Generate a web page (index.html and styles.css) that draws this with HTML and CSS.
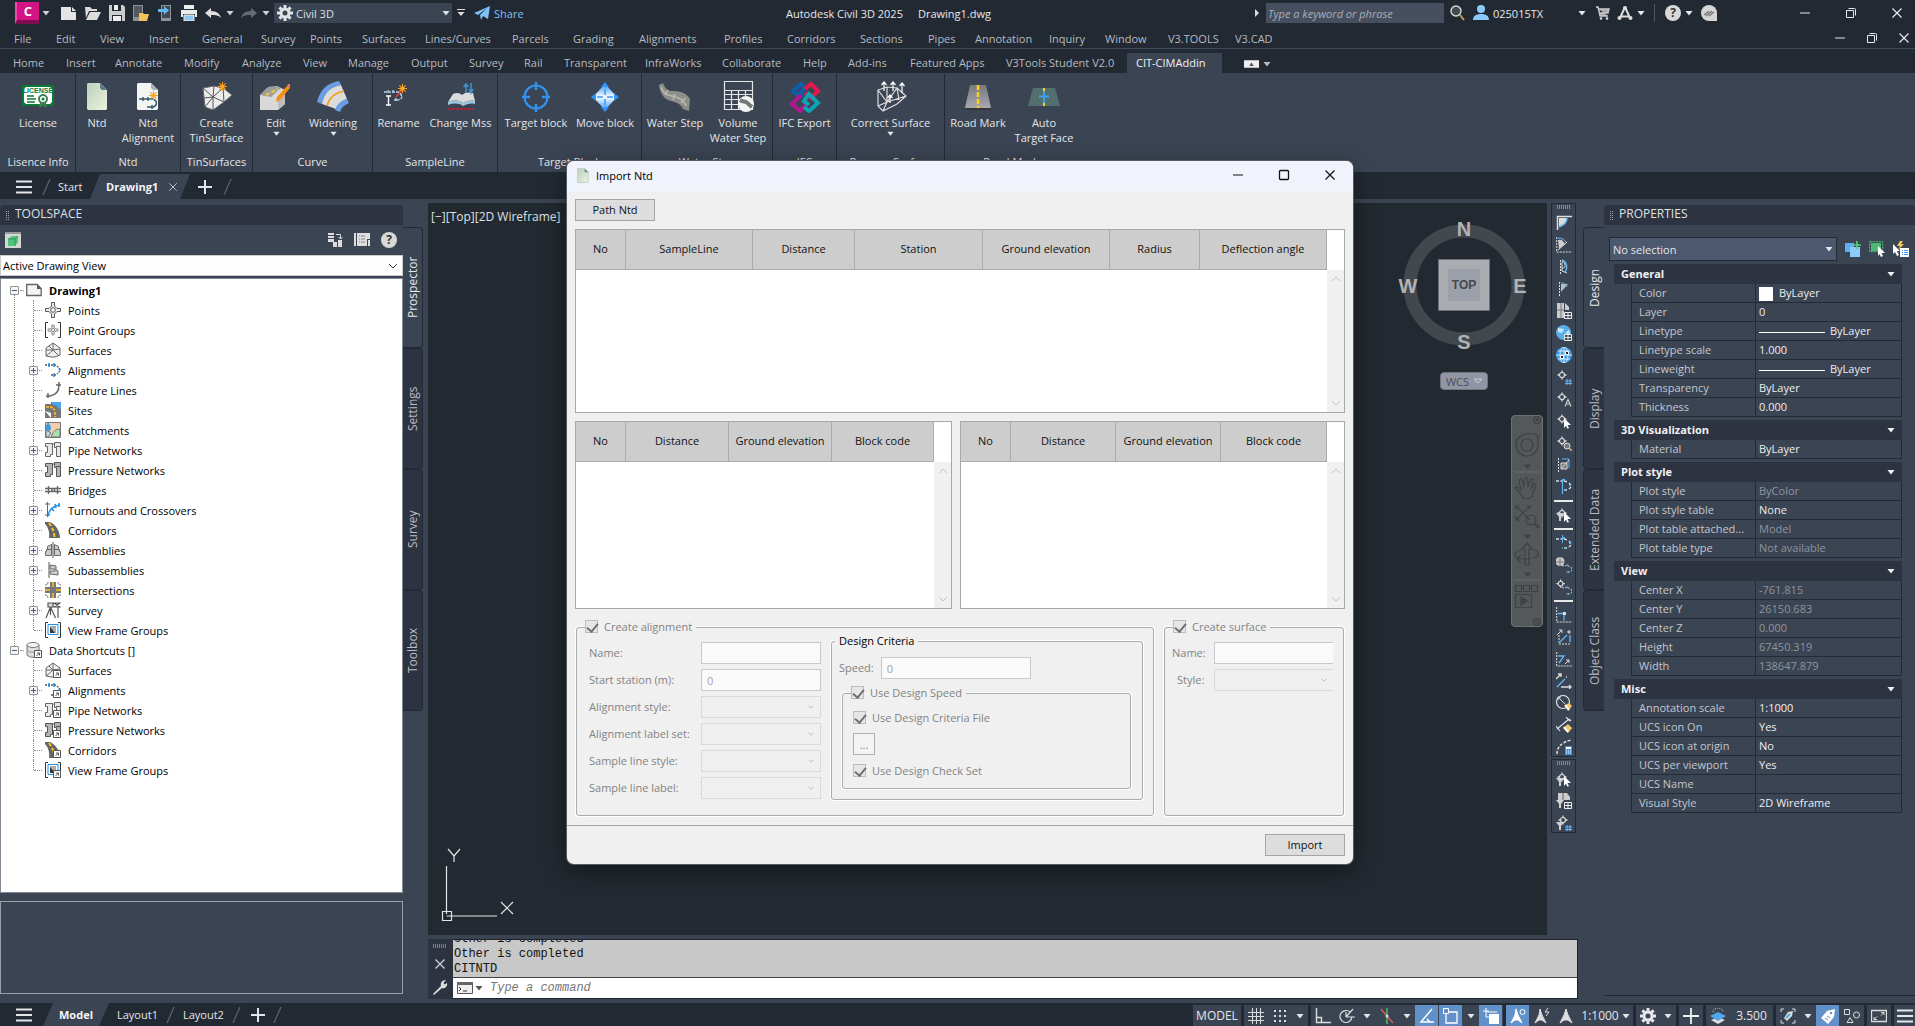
FILE: index.html
```html
<!DOCTYPE html>
<html lang="en">
<head>
<meta charset="utf-8">
<title>Autodesk Civil 3D 2025 - Drawing1.dwg</title>
<link rel="stylesheet" href="styles.css">
</head>
<body>
<svg class="defs" aria-hidden="true">
  <defs>
    <linearGradient id="gPage" x1="0" y1="0" x2="1" y2="1"><stop offset="0" stop-color="#b9d0bf"/><stop offset="1" stop-color="#eef3dc"/></linearGradient>
    <linearGradient id="gMove" x1="0" y1="0" x2="0" y2="1"><stop offset="0" stop-color="#2e95ff"/><stop offset=".5" stop-color="#fff"/><stop offset="1" stop-color="#2e95ff"/></linearGradient>
    <linearGradient id="gRoad" x1="0" y1="0" x2="0" y2="1"><stop offset="0" stop-color="#77797d"/><stop offset="1" stop-color="#a8a8ae"/></linearGradient>
  </defs>
  <symbol id="caret" viewBox="0 0 8 8"><path d="M0.500 2h7L4 6.500z" fill="currentColor"/></symbol>
  <symbol id="chev" viewBox="0 0 10 10"><path d="M1 3l4 4 4-4" fill="none" stroke="currentColor"/></symbol>
  <symbol id="burger" viewBox="0 0 16 14"><path d="M0 1.500h16M0 7h16M0 12.500h16" stroke="currentColor" stroke-width="2.200"/></symbol>
  <symbol id="plus" viewBox="0 0 14 14"><path d="M7 0v14M0 7h14" stroke="currentColor" stroke-width="2"/></symbol>
  <symbol id="slash" viewBox="0 0 9 18"><path d="M8 1L1 17" stroke="#5a6271" stroke-width="1.300"/></symbol>
  <symbol id="gear" viewBox="0 0 16 16"><g stroke="currentColor" stroke-width="3"><path d="M8 0v16M0 8h16M2.400 2.400l11.200 11.200M13.600 2.400L2.400 13.600"/></g><circle cx="8" cy="8" r="5.500" fill="currentColor"/><circle cx="8" cy="8" r="2.500" fill="#3b4453"/></symbol>
  <symbol id="min" viewBox="0 0 12 12"><path d="M1 6h10" stroke="currentColor"/></symbol>
  <symbol id="restore" viewBox="0 0 12 12"><path d="M1.500 3.500h7v7h-7zM3.500 1.500h6a1 1 0 0 1 1 1v6" fill="none" stroke="currentColor"/></symbol>
  <symbol id="max" viewBox="0 0 12 12"><rect x="1.500" y="1.500" width="9" height="9" rx="1" fill="none" stroke="currentColor" stroke-width="1.300"/></symbol>
  <symbol id="x" viewBox="0 0 12 12"><path d="M1.500 1.500l9 9M10.500 1.500l-9 9" stroke="currentColor" stroke-width="1.200"/></symbol>
  <symbol id="star" viewBox="0 0 10 10"><path d="M5 0v10M0 5h10M1.500 1.500l7 7M8.500 1.500l-7 7" stroke="#f9a11b" stroke-width="1.200"/><circle cx="5" cy="5" r="2.300" fill="#ffa51c"/></symbol>
  <symbol id="page" viewBox="0 0 22 28"><path d="M1 1h13l7 7v19H1z" fill="url(#gPage)" stroke="#a9bcae"/><path d="M14 1v7h7z" fill="#6f8f86"/></symbol>
  <symbol id="pt" viewBox="0 0 16 16"><path d="M6.500 .5h3v3.500L12 6.500h3.500v3H12L9.500 12v3.500h-3V12L4 9.500H.5v-3H4L6.500 4z" fill="#eee" stroke="#555"/><circle cx="8" cy="8" r="2.300" fill="#fff" stroke="#555"/></symbol>
  <symbol id="surf" viewBox="0 0 16 16"><path d="M8 1L1 6v8l5 1h4l5-2V6zM8 1v7L1 14M8 8l6 6M1 8l7 0 7-1M4 4l4 4" fill="#eee" stroke="#666"/></symbol>
  <symbol id="align" viewBox="0 0 16 16"><path d="M0 3h11M12 4l3 3M15 9l-3 3M11 13H5" fill="none" stroke="#555" stroke-width="1.300" stroke-dasharray="2 1"/><path d="M4 1v4M9 1v4M13.500 7.500h2.500M9 11v4" stroke="#1e90ea" stroke-width="1.500"/></symbol>
  <symbol id="fline" viewBox="0 0 16 16"><path d="M1 14h4C11 13 14 9 14 3M3 11v5M11 3h5M14 0v4" fill="none" stroke="#666" stroke-width="1.500"/></symbol>
  <symbol id="road" viewBox="0 0 16 16"><path d="M0 0h5c6 3 10 9 10 16H4C5 10 3 5 0 2z" fill="#666"/><path d="M4 1l2 3M7 6l1.500 3M9 11l.5 4" stroke="#ffc41e" stroke-width="2"/></symbol>
  <symbol id="sites" viewBox="0 0 16 16"><path d="M0 0h16v16H0z" fill="#777"/><path d="M7 0h9v8C13 5 11 3 7 2z" fill="#4aa6e8"/><path d="M0 9l6 2v5z" fill="#fff"/><path d="M0 0h6v2H0z" fill="#fff"/><path d="M1 5h5l4 3M10 10v5" stroke="#ffc41e" stroke-width="1.500" stroke-dasharray="3 1" fill="none"/></symbol>
  <symbol id="catch" viewBox="0 0 16 16"><path d="M.5 .5h15v15H.5z" fill="#f7cbb0" stroke="#777"/><path d="M15 7C9 7 8 11 6 15h9z" fill="#a8e0b4" stroke="#777"/><path d="M1 8l5 3-3 4H1z" fill="#b3dcf5" stroke="#777"/><path d="M3 0c2 3 3 4 3 6a3 3 0 0 1-6 0c0-2 2-3 3-6z" fill="#3d9edb"/></symbol>
  <symbol id="pipe" viewBox="0 0 16 16"><path d="M.5 1.500h7v11h-2v2h-5v-4h2v-6h-2zM9.500 .5h6v14h-4v-9h-2zM7.500 2h2M11 4.500h5" fill="#e8e8e8" stroke="#666"/></symbol>
  <symbol id="press" viewBox="0 0 16 16"><path d="M.5 1.500h7v11h-2v2h-5v-4h2v-6h-2zM9.500 .5h6v14h-4v-9h-2zM7.500 2h2M11 4.500h5" fill="#b4b4b4" stroke="#555"/></symbol>
  <symbol id="bridge" viewBox="0 0 16 16"><path d="M0 6.500h16M0 9.500h16M3.500 4v8M12.500 4v8M7 6v3M9.500 6v3" stroke="#666" stroke-width="1.400"/></symbol>
  <symbol id="turn" viewBox="0 0 16 16"><path d="M2.500 0v15M0 2h5M0 13h5" stroke="#666"/><path d="M3 14C4 8 7 4 15 3M6 6l3 3M10 2l1 4M14 1v4" stroke="#1e90ea" stroke-width="1.600" fill="none"/></symbol>
  <symbol id="assem" viewBox="0 0 16 16"><path d="M8 0v16" stroke="#555"/><path d="M1.500 7.500h5v6h-6v-4h1zM9.500 7.500h5v2h1v4h-6zM2.500 4.500l4-2v5h-4zM9.500 2.500l4 2v3h-4z" fill="#ccc" stroke="#666"/></symbol>
  <symbol id="subas" viewBox="0 0 16 16"><path d="M4 0v16" stroke="#555"/><path d="M5 3l6 1v4l2 1v4l-8-1V9h5V7H5z" fill="#ccc" stroke="#666"/></symbol>
  <symbol id="inter" viewBox="0 0 16 16"><path d="M5 0h6v5h5v6h-5v5H5v-5H0V5h5z" fill="#777"/><path d="M8 0v5M8 11v5M0 8h5M11 8h5" stroke="#ffc41e" stroke-width="1.500"/><path d="M3 0c0 2-1 3-3 3M13 0c0 2 1 3 3 3M3 16c0-2-1-3-3-3M13 16c0-2 1-3 3-3" stroke="#777" fill="none"/></symbol>
  <symbol id="survey" viewBox="0 0 16 16"><path d="M3 1h5v4H3zM5.500 5L1 16M5.500 5l5 11M5.500 5v8M9 1h6l-6 4h6zM13 5v11" fill="#ddd" stroke="#555" stroke-width="1.200"/></symbol>
  <symbol id="vframe" viewBox="0 0 16 16"><path d="M3 .5H.5v15H3M13 .5h2.500v15H13" stroke="#333" fill="none"/><path d="M3 2.500h10v10H3z" fill="#fff" stroke="#1e90ea"/><path d="M5 4h6v7H5z" fill="#aaa"/><path d="M5 5l5 6H5z" fill="#333"/></symbol>
  <symbol id="link" viewBox="0 0 16 16"><path d="M8.500 8.500h7v7h-7z" fill="#fff" stroke="#555"/><path d="M11 11h2.500v2.500M13.500 11L10.500 14" stroke="#555" fill="none"/></symbol>
  <symbol id="pw" viewBox="0 0 16 16"><path d="M6 1.500v9M1.500 6h9" stroke="#ddd" stroke-width="1.300"/><circle cx="6" cy="6" r="2.500" fill="#3b4453" stroke="#ddd" stroke-width="1.200"/></symbol>
  <symbol id="arrowc" viewBox="0 0 16 16"><path d="M8 5l7 7h-3.500l1.500 3-1.500.8-1.500-3L8 15z" fill="#fff"/></symbol>
  <symbol id="hash" viewBox="0 0 16 16"><path d="M11 10v6M14 10v6M9 12h7M9 14.500h7" stroke="#63b6f5" stroke-width="1.100"/></symbol>
  <symbol id="tbl" viewBox="0 0 16 16"><path d="M8.500 9.500h7v6h-7zM12 9.500v6M8.500 12.500h7" fill="#3b4453" stroke="#eee"/></symbol>
  <symbol id="funnel" viewBox="0 0 16 16"><path d="M0 8h8L5 12v4H3v-4z" fill="#cfcfcf"/></symbol>
  <symbol id="dalign" viewBox="0 0 16 16"><path d="M0 4h6M8 4l4 1M13 6l3 3M15 10l-3 3M11 13H6" stroke="#ddd" stroke-width="1.400" stroke-dasharray="3 1.500"/><path d="M6 3h3M14 7v2M9 12v2" stroke="#63b6f5" stroke-width="2"/></symbol>
  <symbol id="grip" viewBox="0 0 14 4"><path d="M0 1h14M0 3h14" stroke="#c8ccd2" stroke-dasharray="1 1"/></symbol>
</svg>

<header class="titlebar">
  <div class="qat">
    <button class="logo" aria-label="Application menu">C</button><button class="car" aria-label="Menu"><svg><use href="#caret"/></svg></button>
    <div class="qicons">
      <button aria-label="New"><svg class="i" viewBox="0 0 16 16"><path d="M0 2h10v5h5v8H0z" fill="#e4e4e4"/><path d="M11 2l4 4h-4z" fill="#e4e4e4"/></svg></button>
      <button aria-label="Open"><svg class="i" viewBox="0 0 16 16"><path d="M0 2h5l2 2h5v2H4L1 13z" fill="#ddd"/><path d="M5 7h11l-4 8H1z" fill="#ddd"/></svg></button>
      <button aria-label="Save"><svg class="i" viewBox="0 0 16 16"><path d="M0 0h14l2 2v14H0z" fill="#ccc"/><path d="M3 0h9v6H3zM3 10h10v6H3z" fill="#222933"/><path d="M5 0h4v5H5zM4 11h8v5H4z" fill="#eee"/></svg></button>
      <button aria-label="Open from mobile"><svg class="i" viewBox="0 0 16 16"><path d="M0 0h10v16H0z" fill="#8f9296"/><path d="M1 1h8v11H1z" fill="#55585c"/><path d="M6 8h4l1 1h5l-2 7H6z" fill="#f4c25c"/></svg></button>
      <button aria-label="Save to mobile"><svg class="i" viewBox="0 0 16 16"><path d="M4 0h10v16H4z" fill="#8f9296"/><path d="M5 1h8v12H5z" fill="#44494f"/><path d="M1 4h6V1l5 4.500-5 4V7H1z" fill="#63b6f5"/></svg></button>
      <button aria-label="Plot"><svg class="i" viewBox="0 0 16 16"><path d="M3 0h10v4H3zM0 5h16v7h-2V9H2v3H0z" fill="#ececec"/><path d="M3 10h10v6H3z" fill="#8dc7f5" stroke="#eee"/></svg></button>
      <div class="split"><button aria-label="Undo"><svg class="i" viewBox="0 0 16 16"><path d="M0 8l6-5v3c6 0 9 3 10 7-3-3-5-3-10-3v3z" fill="#e0e0e0"/></svg></button><button class="car" aria-label="Undo list"><svg><use href="#caret"/></svg></button></div>
      <div class="split dim"><button aria-label="Redo"><svg class="i" viewBox="0 0 16 16"><path d="M16 8l-6-5v3C4 6 1 9 0 13c3-3 5-3 10-3v3z" fill="#666c76"/></svg></button><button class="car" aria-label="Redo list"><svg><use href="#caret"/></svg></button></div>
    </div>
    <label class="workspace"><svg class="i"><use href="#gear"/></svg><select aria-label="Workspace"><option>Civil 3D</option></select><svg class="ca"><use href="#caret"/></svg></label>
    <button class="car" aria-label="Customize"><svg viewBox="0 0 8 8"><path d="M0 .5h8" stroke="#ddd"/><path d="M.5 3h7L4 7z" fill="#ddd"/></svg></button>
    <button class="share"><svg class="i" viewBox="0 0 16 16"><path d="M0 8L16 1l-2 13-5-3-2 4-1-5 7-7-9 7z" fill="#7cc1f7"/></svg>Share</button>
  </div>
  <div class="doctitle"><span>Autodesk Civil 3D 2025</span><span>Drawing1.dwg</span></div>
  <div class="infobar">
    <svg class="ca" viewBox="0 0 8 8"><path d="M2 0v8l4-4z" fill="#ddd"/></svg>
    <input class="search" type="text" placeholder="Type a keyword or phrase" aria-label="Search">
    <button class="mag" aria-label="Search"><svg class="i" viewBox="0 0 16 16"><circle cx="7" cy="6" r="5" fill="#444b54" stroke="#ddd" stroke-width="1.400"/><path d="M11 10l4 5" stroke="#c79c5c" stroke-width="2"/></svg></button>
    <button class="user"><svg class="i" viewBox="0 0 16 16"><circle cx="8" cy="4" r="4" fill="#8acbfb"/><path d="M0 15c0-4 3-6 8-6s8 2 8 6z" fill="#8acbfb"/></svg>025015TX</button>
    <svg class="ca push"><use href="#caret"/></svg>
    <button aria-label="Store"><svg class="i" viewBox="0 0 16 16"><path d="M1 2h2l2 9h8M4 4h10l-1 4H5" fill="#aaa" stroke="#ccc" stroke-width="1.300"/><circle cx="6" cy="13.500" r="1.300" fill="#ddd"/><circle cx="12" cy="13.500" r="1.300" fill="#ddd"/></svg></button>
    <div class="split"><button aria-label="Autodesk apps"><svg class="i" viewBox="0 0 16 16"><path d="M8 2L3 13M8 2l5 11M3 11.500h10" stroke="#ddd" stroke-width="2"/><circle cx="8" cy="3" r="2" fill="#ddd"/><circle cx="2.500" cy="13" r="2" fill="#ddd"/><circle cx="13.500" cy="13" r="2" fill="#ddd"/></svg></button><svg class="ca"><use href="#caret"/></svg></div>
    <span class="vbar"></span>
    <div class="split"><button class="q" aria-label="Help">?</button><svg class="ca"><use href="#caret"/></svg></div>
    <button aria-label="Feedback"><svg class="i" viewBox="0 0 16 16"><path d="M8 0a8 8 0 0 1 8 8v8H8A8 8 0 0 1 8 0z" fill="#d5d5d5"/><path d="M3 10l5-4M5 11l6-5M8 11l5-4" stroke="#777" stroke-width="1.500"/></svg></button>
    <div class="winctl"><button aria-label="Minimize"><svg><use href="#min"/></svg></button><button aria-label="Restore"><svg><use href="#restore"/></svg></button><button aria-label="Close"><svg><use href="#x"/></svg></button></div>
  </div>
</header>

<nav class="menubar">
  <div class="menus"><a href="#">File</a><a href="#">Edit</a><a href="#">View</a><a href="#">Insert</a><a href="#">General</a><a href="#">Survey</a><a href="#">Points</a><a href="#">Surfaces</a><a href="#">Lines/Curves</a><a href="#">Parcels</a><a href="#">Grading</a><a href="#">Alignments</a><a href="#">Profiles</a><a href="#">Corridors</a><a href="#">Sections</a><a href="#">Pipes</a><a href="#">Annotation</a><a href="#">Inquiry</a><a href="#">Window</a><a href="#">V3.TOOLS</a><a href="#">V3.CAD</a></div>
  <div class="docctl"><button aria-label="Minimize drawing"><svg><use href="#min"/></svg></button><button aria-label="Restore drawing"><svg><use href="#restore"/></svg></button><button aria-label="Close drawing"><svg><use href="#x"/></svg></button></div>
</nav>

<nav class="rtabs"><a href="#">Home</a><a href="#">Insert</a><a href="#">Annotate</a><a href="#">Modify</a><a href="#">Analyze</a><a href="#">View</a><a href="#">Manage</a><a href="#">Output</a><a href="#">Survey</a><a href="#">Rail</a><a href="#">Transparent</a><a href="#">InfraWorks</a><a href="#">Collaborate</a><a href="#">Help</a><a href="#">Add-ins</a><a href="#">Featured Apps</a><a href="#">V3Tools Student V2.0</a><a href="#" class="on">CIT-CIMAddin</a><button class="rmin" aria-label="Minimize ribbon"><svg class="rbox" viewBox="0 0 16 8"><path d="M0 0h16v8H0z" fill="#eee"/><path d="M5.500 6h5L8 2.500z" fill="#555"/></svg><svg class="ca"><use href="#caret"/></svg></button></nav>

<section class="ribbon">
  <div class="rp p1"><div class="rb"><button><svg viewBox="0 0 32 32"><rect x="0" y="4" width="32" height="21" rx="1" fill="#0b7a34"/><path d="M4 6h24l2 2v13l-2 2H4l-2-2V8z" fill="#fff"/><text x="16" y="12" font-size="7" font-weight="700" text-anchor="middle" fill="#0b7a34" class="sv">LICENSE</text><path d="M5 15h7M5 18h9M5 21h8" stroke="#0b7a34" stroke-width="1.500"/><circle cx="21" cy="18" r="4" fill="#fff" stroke="#3f7d59" stroke-width="2"/><circle cx="21" cy="18" r="1.500" fill="#0b7a34"/><path d="M18 22l-1 4h3l1-3 1 3h3l-1-4" fill="#3f7d59"/></svg>License</button></div><h2>Lisence Info</h2></div>
  <div class="rp p2"><div class="rb"><button><svg viewBox="0 0 32 32"><path d="M6 3l1-1h12l7 7v19l-1 1H7l-1-1z" fill="url(#gPage)"/><path d="M19 2v5l2 2h5z" fill="#5b7c86"/></svg>Ntd</button><button><svg viewBox="0 0 32 32"><path d="M5 3l1-1h13l7 7v19l-1 1H6l-1-1z" fill="#f3f5f3"/><path d="M19 2v5l2 2h5z" fill="#a5b2b4"/><path d="M7 18h14c5 2 4 7 0 8h-6M11 16v4M16 16v4M20 24v4" fill="none" stroke="#33556b" stroke-width="1.400"/><use href="#star" x="17" y="10" width="9" height="9"/></svg>Ntd<br>Alignment</button></div><h2>Ntd</h2></div>
  <div class="rp p3"><div class="rb"><button><svg viewBox="0 0 32 32"><path d="M2 7l11-2 9 2 9 7-8 7-11 8-8-3z" fill="#ececec" stroke="#666"/><path d="M2 7l10 9L4 26M12 16l1-11M12 16l10-9M12 16l11 5M12 16v13M22 7l1 14M3 17l9-1" stroke="#555" fill="none"/><use href="#star" x="17" y="1" width="9" height="9"/></svg>Create<br>TinSurface</button></div><h2>TinSurfaces</h2></div>
  <div class="rp p4"><div class="rb"><button><svg viewBox="0 0 32 32"><path d="M0 14L7 7l10-2 8 4v14l-7 6H0z" fill="#d9d9d9"/><path d="M0 14L8 6c4-1 9-1 13 1l-10 9z" fill="#9c9c9c"/><path d="M18 16l7-5v12l-7 6z" fill="#bdbdbd"/><path d="M6 14l12-6" stroke="#f6c945" stroke-width="2" stroke-dasharray="4 2"/><path d="M16 21l1-5L27 5l3 2-10 12z" fill="#f7900c"/><path d="M27 5l1-2h2v4z" fill="#e37b78"/></svg>Edit<svg class="ca"><use href="#caret"/></svg></button><button><svg viewBox="0 0 32 32"><path d="M0 21C3 9 10 2 22 0l2 4C13 6 7 12 5 23z" fill="#6a9ee2"/><path d="M5 23C7 12 13 6 24 4l6 14c-6 2-9 5-11 10z" fill="#dcdcdc"/><path d="M30 18l2 4c-5 2-8 5-9 9l-5-2c2-6 6-9 12-11z" fill="#6a9ee2"/><path d="M10 25c2-8 7-13 17-15" stroke="#f0a020" stroke-width="1.600" fill="none"/></svg>Widening<svg class="ca"><use href="#caret"/></svg></button></div><h2>Curve</h2></div>
  <div class="rp p5"><div class="rb"><button><svg viewBox="0 0 32 32"><path d="M1 11h13c6 1 7 8 0 8h-3M5 9v4M10 9v4M17 13l2 2M13 17v4" fill="none" stroke="#b5cfe2" stroke-width="1.300" stroke-dasharray="3 1"/><path d="M3 15h5M5.500 15v9M3 24h5" stroke="#fff" stroke-width="1.400"/><path d="M13 16l7-8" stroke="#e33" stroke-width="1.500"/><use href="#star" x="15" y="3" width="9" height="9"/></svg>Rename</button><button><svg viewBox="0 0 32 32"><path d="M3 21l5-8c4-2 7-1 9 1 3-3 7-3 11-2l2 8c-4-1-8 0-12 2-4-3-9-3-15-1z" fill="#dcdcdc"/><path d="M3 21c6-2 11-2 15 1 4-2 8-3 12-2v3c-5-1-8 0-12 2-4-3-9-3-15-1z" fill="#9cc8df"/><path d="M3 28h26" stroke="#b5263b" stroke-width="1.500" stroke-dasharray="3 1"/><path d="M21 12V3M18.500 6L21 3l2.500 3M26 2v9M24 8l2 4 2-4" stroke="#3f93cc" stroke-width="1.600" fill="none"/></svg>Change Mss</button></div><h2>SampleLine</h2></div>
  <div class="rp p6"><div class="rb"><button><svg viewBox="0 0 32 32"><circle cx="16" cy="16" r="11.500" fill="none" stroke="#3293ee" stroke-width="2.200"/><path d="M16 1v8M16 23v8M2 16h8M22 16h8" stroke="#3293ee" stroke-width="2.500"/></svg>Target block</button><button><svg viewBox="0 0 32 32"><path d="M16 3l12 13-12 13L4 16z" fill="url(#gMove)"/><path d="M16 8v16M8 16h16" stroke="#3b98f5" stroke-width="1.500" stroke-dasharray="6 4"/><path d="M12 6l4-5 4 5zM12 26l4 5 4-5zM7 12l-5 4 5 4zM25 12l5 4-5 4z" fill="#2e95ff"/></svg>Move block</button></div><h2>Target Block</h2></div>
  <div class="rp p7"><div class="rb"><button><svg viewBox="0 0 32 32"><path d="M0 4l4-2c2 5 4 8 9 8 7 0 14 1 18 8l-1 12-6-2c-2-5-7-7-12-8S1 14 0 4z" fill="#8d8d89"/><path d="M2 6c2 6 5 8 11 9s12 3 14 10M6 14l3-5M14 19l2-6M22 22l4-5" stroke="#b9b9b5" fill="none" stroke-width="1.500"/></svg>Water Step</button><button><svg viewBox="0 0 32 32"><path d="M2.500 .5h28v28h-28zM2.500 9.500h28M2.500 13.500h28M2.500 18.500h28M2.500 23.500h28M9.500 9.500v19M16.500 9.500v19M23.500 9.500v19" fill="none" stroke="#e5e5e5" stroke-width="1.200"/><circle cx="24" cy="23" r="8" fill="#f4f4f4"/><path d="M18 19c3 2 4 1 6 2s3 3 6 5" stroke="#777" stroke-width="4" fill="none"/></svg>Volume<br>Water Step</button></div><h2>Water Step</h2></div>
  <div class="rp p8"><div class="rb"><button><svg viewBox="0 0 32 32" fill="none" stroke-width="4"><path d="M12 17L4 10l8-7 4 4-5 5 4 3" stroke="#0c5fa8"/><path d="M16 8l6-5 7 7-7 7-6-5" stroke="#e5174f"/><path d="M12 14l-9 9 8 7 7-7-4-4" stroke="#b0178f"/><path d="M15 26l5 4 9-8-9-9-5 7 5 4" stroke="#0aa5b5"/></svg>IFC Export</button></div><h2>IFC</h2></div>
  <div class="rp p9"><div class="rb"><button><svg viewBox="0 0 32 32" fill="none" stroke="#dedede" stroke-width="1.200"><path d="M3 9l9-3 10 1 9 8-9 8-14 7-5-5zM3 9l9 12 10-14 2 12M12 6l0 15-9 4M12 21l19-6M12 21l-4 9"/><path d="M9 10V1M6.500 4L9 1l2.500 3M18 10V1M15.500 4L18 1l2.500 3M27 12V2M24.500 5L27 2l2.500 3M15 22v-8M12.500 17l2.500-3 2.500 3" stroke="#fff"/></svg>Correct Surface<svg class="ca"><use href="#caret"/></svg></button></div><h2>Reverse Surface</h2></div>
  <div class="rp p10"><div class="rb"><button><svg viewBox="0 0 32 32"><path d="M8 4h16l5 23H3z" fill="url(#gRoad)"/><path d="M3 27h26v1.500H3z" fill="#3a3330"/><path d="M16 4v23" stroke="#ffcf1f" stroke-width="2.500" stroke-dasharray="5 2"/></svg>Road Mark</button><button><svg viewBox="0 0 32 32"><path d="M5 7h22l5 18H0z" fill="#52706f"/><path d="M16 7v3M16 22v3" stroke="#ffcf1f" stroke-width="2"/><path d="M16 10v12M11 15.500h10" stroke="#3fa0ee" stroke-width="2"/></svg>Auto<br>Target Face</button></div><h2>Road Mark</h2></div>
</section>

<nav class="ftabs">
  <button class="hb" aria-label="Menu"><svg class="bg"><use href="#burger"/></svg></button><svg class="sl"><use href="#slash"/></svg>
  <a href="#" class="start">Start</a><a href="#" class="cur"><b>Drawing1</b><svg class="cx"><use href="#x"/></svg></a>
  <button class="pl" aria-label="New drawing"><svg><use href="#plus"/></svg></button><svg class="sl"><use href="#slash"/></svg>
</nav>

<main>
  <aside class="toolspace">
    <div class="tsbody">
      <h2 class="phead">TOOLSPACE</h2>
      <div class="tstools">
        <button aria-label="Toggle model"><svg class="i" viewBox="0 0 16 16"><path d="M0 0h16v16H0z" fill="#d6d6d6"/><path d="M0 0h16v2H0z" fill="#999"/><path d="M3 7l4-3h6v6l-3 4H3z" fill="#4cc47c"/><path d="M3 7h7v7M10 7l3-3" stroke="#2f9a5a" fill="none"/></svg></button>
        <button aria-label="Panorama"><svg class="i" viewBox="0 0 16 16"><path d="M1 1h6v2H1zM1 4h6v2H1zM1 7h6v3H1zM6 10h4v5H6zM11 8h4v7h-4z" fill="#ddd"/><path d="M9 2.500h4.500V7M11.500 5l2 2 2-2" stroke="#ddd" fill="none"/></svg></button>
        <button aria-label="Item preview"><svg class="i" viewBox="0 0 16 16"><path d="M0 1h2v13H0zM3 1h13v6h-3v7H3zM14 8h2v6h-2z" fill="#ddd"/><path d="M5 4h6M5 7h6M5 10h6" stroke="#888" stroke-dasharray="1 1 4 1"/></svg></button>
        <button class="q" aria-label="Help">?</button>
      </div>
      <label class="view"><select aria-label="View"><option>Active Drawing View</option></select><svg><use href="#chev"/></svg></label>
      <ul class="tree">
        <li class="root"><div class="row"><button class="ex" aria-label="Collapse"></button><svg class="i" viewBox="0 0 16 13"><path d="M.7 1h10.500l4 4v7H.7z" fill="#f4f4f4" stroke="#666" stroke-width="1.300"/><path d="M11 1l4.500 4.500H11z" fill="#555"/></svg><b>Drawing1</b></div>
          <ul>
            <li><i></i><svg class="i"><use href="#pt"/></svg>Points</li>
            <li><i></i><svg class="i" viewBox="0 0 16 16"><path d="M3 .5H.5v15H3M13 .5h2.500v15H13" stroke="#333" fill="none"/><use href="#pt" x="2.500" y="2.500" width="11" height="11"/></svg>Point Groups</li>
            <li><i></i><svg class="i"><use href="#surf"/></svg>Surfaces</li>
            <li><button class="ex add" aria-label="Expand"></button><svg class="i"><use href="#align"/></svg>Alignments</li>
            <li><i></i><svg class="i"><use href="#fline"/></svg>Feature Lines</li>
            <li><i></i><svg class="i"><use href="#sites"/></svg>Sites</li>
            <li><i></i><svg class="i"><use href="#catch"/></svg>Catchments</li>
            <li><button class="ex add" aria-label="Expand"></button><svg class="i"><use href="#pipe"/></svg>Pipe Networks</li>
            <li><i></i><svg class="i"><use href="#press"/></svg>Pressure Networks</li>
            <li><i></i><svg class="i"><use href="#bridge"/></svg>Bridges</li>
            <li><button class="ex add" aria-label="Expand"></button><svg class="i"><use href="#turn"/></svg>Turnouts and Crossovers</li>
            <li><i></i><svg class="i"><use href="#road"/></svg>Corridors</li>
            <li><button class="ex add" aria-label="Expand"></button><svg class="i"><use href="#assem"/></svg>Assemblies</li>
            <li><button class="ex add" aria-label="Expand"></button><svg class="i"><use href="#subas"/></svg>Subassemblies</li>
            <li><i></i><svg class="i"><use href="#inter"/></svg>Intersections</li>
            <li><button class="ex add" aria-label="Expand"></button><svg class="i"><use href="#survey"/></svg>Survey</li>
            <li><i></i><svg class="i"><use href="#vframe"/></svg>View Frame Groups</li>
          </ul></li>
        <li class="root last"><div class="row"><button class="ex" aria-label="Collapse"></button><svg class="i" viewBox="0 0 16 16"><path d="M1 3v10c2 3 10 3 12 0V3" fill="#ddd" stroke="#777"/><ellipse cx="7" cy="3" rx="6" ry="2.500" fill="#f4f4f4" stroke="#777"/><path d="M1 8c2 3 10 3 12 0" fill="none" stroke="#999"/><use href="#link"/></svg>Data Shortcuts []</div>
          <ul>
            <li><i></i><svg class="i" viewBox="0 0 16 16"><use href="#surf"/><use href="#link"/></svg>Surfaces</li>
            <li><button class="ex add" aria-label="Expand"></button><svg class="i" viewBox="0 0 16 16"><use href="#align"/><use href="#link"/></svg>Alignments</li>
            <li><i></i><svg class="i" viewBox="0 0 16 16"><use href="#pipe"/><use href="#link"/></svg>Pipe Networks</li>
            <li><i></i><svg class="i" viewBox="0 0 16 16"><use href="#press"/><use href="#link"/></svg>Pressure Networks</li>
            <li><i></i><svg class="i" viewBox="0 0 16 16"><use href="#road"/><use href="#link"/></svg>Corridors</li>
            <li><i></i><svg class="i" viewBox="0 0 16 16"><use href="#vframe"/><use href="#link"/></svg>View Frame Groups</li>
          </ul></li>
      </ul>
      <div class="preview"></div>
    </div>
    <nav class="vtabs"><a href="#" class="on">Prospector</a><a href="#">Settings</a><a href="#">Survey</a><a href="#">Toolbox</a></nav>
  </aside>

  <div class="center">
    <div class="work">
      <div class="canvas">
        <p class="vplabel">[−][Top][2D Wireframe]</p>
        <svg class="cube" viewBox="-8 -6 136 140"><circle cx="62" cy="63" r="54" fill="none" stroke="#43484e" stroke-width="13"/><path d="M36.500 37.500h51v51h-51z" fill="#a9adb1" stroke="#6d7074"/><path d="M46 47h32v32H46z" fill="#9a9fa9"/><g class="sv" font-weight="700" fill="#b1b2b4" text-anchor="middle" font-size="20"><text x="62" y="14">N</text><text x="62" y="127">S</text><text x="6" y="71">W</text><text x="118" y="71">E</text><text x="62" y="67" font-size="12" fill="#45494f">TOP</text></g></svg>
        <button class="wcs">WCS<svg viewBox="0 0 8 8"><path d="M0 2h8L4 6z" fill="none" stroke="#c9cbd3"/></svg></button>
        <svg class="navbar" viewBox="0 0 32 212" fill="none" stroke="#3d4245" stroke-width="1.200"><rect x=".5" y=".5" width="31" height="211" rx="4" fill="#54585b" stroke="#6c7073"/><circle cx="26" cy="5" r="3.500"/><path d="M24.500 3.500l3 3M27.500 3.500l-3 3M5 30a11 11 0 0 1 11-11h8a3 3 0 0 1 3 3v8a11 11 0 0 1-22 0z"/><circle cx="16" cy="30" r="6"/><path d="M14 50h5l-2.500 3z" fill="#3d4245"/><path d="M3 57h26M3 165h26" stroke="#686c6f"/><path d="M12 83c-2-5-5-8-8-10 2-2 4 0 6 2-1-5-3-10-1-11s3 4 4 8c0-5 0-10 2-10s2 5 2 10c1-4 2-9 4-8s0 6-1 10c2-4 4-6 5-5s-3 8-4 12c-1 2-3 3-6 3z"/><path d="M5 91l14 14M19 91L5 105M5 95v-4h4M15 91h4v4M5 101v4h4"/><circle cx="20" cy="105" r="5"/><path d="M24 109l4 4" stroke-width="3"/><path d="M14 120h5l-2.500 3zM14 158h5l-2.500 3z" fill="#3d4245"/><path d="M14 150v-16h-3l5-6 5 6h-3v16zM12 134c-12 3-10 10 2 10h6M20 134c10 2 9 8 2 9M10 140l-4 4 4 4"/><path d="M4.500 170.500h6v6h-6zM12.500 170.500h6v6h-6zM20.500 170.500h6v6h-6zM4.500 179.500h16v13h-16z"/><path d="M10 182v8l6-4z" fill="#3d4245"/><circle cx="26" cy="207" r="3.500"/><path d="M24 206h4M24 208h4"/></svg>
        <svg class="ucs" viewBox="0 0 76 76" fill="none" stroke="#e2e4e6" stroke-width="1.200"><path d="M8.500 68V20M8.500 70H59M4.500 65.500h9v9h-9zM10 3l6 7 6-7M16 10v6M63 56l12 12M75 56L63 68"/></svg>
      </div>
      <div class="strips">
        <div class="strip">
          <svg class="grip"><use href="#grip"/></svg>
          <svg class="i" viewBox="0 0 16 16"><path d="M1.500 15V1.500H16" stroke="#ddd" stroke-width="1.500" fill="none"/><path d="M3 3h8c0 4-3 8-8 9z" fill="#ddd"/><path d="M11 3c0 5-3 7-8 9" stroke="#63b6f5" fill="none" stroke-width="1.500"/></svg>
          <svg class="i" viewBox="0 0 16 16"><path d="M.7 0v15H16" stroke="#ddd" stroke-dasharray="2 1" fill="none"/><path d="M2 3c3-1 5 0 7 4L3 12z" fill="#ccc"/><path d="M2 1c4 0 6 1 8 4" stroke="#63b6f5" fill="none"/><path d="M2 13l9-8" stroke="#ddd"/></svg>
          <svg class="i" viewBox="0 0 16 16"><path d="M4.500 1v14" stroke="#ddd" stroke-dasharray="2 1"/><path d="M6 2c4 2 4 8 0 7M6 3v9l5 2" stroke="#ddd" fill="none"/><path d="M6 1c5 2 6 8 3 12" stroke="#63b6f5" fill="none" stroke-width="1.500"/></svg>
          <svg class="i" viewBox="0 0 16 16"><path d="M3.500 1v14" stroke="#ddd" stroke-dasharray="2 1"/><path d="M5 3l7 0-7 8z" fill="#bbb"/><path d="M5 2c4 0 5 1 6 4" stroke="#63b6f5" fill="none"/></svg>
          <svg class="i" viewBox="0 0 16 16"><path d="M1 0h7v15H1zM9 0l4 4v3H9z" fill="#ccc"/><path d="M1 7h7M5 0v15" stroke="#777"/><use href="#tbl"/></svg>
          <svg class="i" viewBox="0 0 16 16"><circle cx="7.500" cy="7.500" r="7.500" fill="#58aee8"/><path d="M2 3l6 1-2 4-4-1zM9 8l4-3 1 5z" fill="#c9e6fa"/><use href="#tbl"/></svg>
          <svg class="i" viewBox="0 0 16 16"><circle cx="8" cy="8" r="8" fill="#3c9be0"/><path d="M8 0v16M0 8h16M2 4h12M2 12h12" stroke="#cfe9fb"/><ellipse cx="8" cy="8" rx="4" ry="8" fill="none" stroke="#cfe9fb"/><path d="M4.500 8.500h3v3h-3zM9.500 4.500h3v3h-3z" fill="#222" stroke="#fff"/></svg>
          <svg class="i" viewBox="0 0 16 16"><use href="#pw"/><use href="#hash"/></svg>
          <svg class="i" viewBox="0 0 16 16"><use href="#pw"/><path d="M9 15.500l3-7 3 7M10 13h4" stroke="#ccc" fill="none" stroke-width="1.200"/></svg>
          <svg class="i" viewBox="0 0 16 16"><use href="#pw"/><use href="#arrowc"/></svg>
          <svg class="i" viewBox="0 0 16 16"><use href="#pw"/><circle cx="11" cy="11" r="3" fill="#777" stroke="#ddd"/><path d="M13 13l3 3" stroke="#d9b06a" stroke-width="1.500"/></svg>
          <svg class="i" viewBox="0 0 16 16"><path d="M2.500 1v15" stroke="#ddd" stroke-dasharray="2 1"/><path d="M5 6h6v6H5z" fill="#777" stroke="#ddd"/><path d="M6 2h7v9" stroke="#63b6f5" fill="none"/><path d="M5 12l8-9" stroke="#ddd"/></svg>
          <svg class="i" viewBox="0 0 16 16"><use href="#dalign" y="-2" width="16" height="16"/><path d="M6.500 2v13" stroke="#63b6f5" stroke-width="1.200"/></svg>
          <hr>
          <svg class="i" viewBox="0 0 16 16"><use href="#pw"/><use href="#funnel" x="0" y="-2" width="16" height="16"/><use href="#arrowc"/></svg>
          <hr>
          <svg class="i" viewBox="0 0 16 16"><use href="#dalign"/><path d="M6.500 0v8" stroke="#63b6f5"/></svg>
          <svg class="i" viewBox="0 0 16 16"><circle cx="4" cy="4.500" r="4.500" fill="#ccc"/><path d="M0 5h8M4 0v9" stroke="#777"/><use href="#dalign" x="6" y="6" width="11" height="11"/></svg>
          <svg class="i" viewBox="0 0 16 16"><use href="#pw" x="-1" y="-1" width="15" height="15"/><use href="#dalign" x="6" y="6" width="11" height="11"/></svg>
          <hr>
          <svg class="i" viewBox="0 0 16 16"><path d="M.7 0v15H16" stroke="#ddd" stroke-dasharray="2 1" fill="none"/><path d="M2 6.500h6v7" stroke="#63b6f5" fill="none" stroke-width="1.300"/><path d="M7 5h3v3H7z" fill="#ddd"/></svg>
          <svg class="i" viewBox="0 0 16 16"><path d="M3 6v9h12" stroke="#ddd" stroke-dasharray="2 1" fill="none"/><path d="M1 6l5-5M3 1h3v3M12 2h2v2h-2z" stroke="#ddd" fill="none"/><path d="M4 13l7-7M14 6v7" stroke="#63b6f5" stroke-width="1.400"/></svg>
          <svg class="i" viewBox="0 0 16 16"><path d="M.7 1v14H16" stroke="#ddd" stroke-dasharray="2 1" fill="none"/><path d="M2 5h6l-5 7" stroke="#63b6f5" fill="none" stroke-width="1.300"/><path d="M9 13l4-4M10 9h3v3" stroke="#ddd" fill="none"/></svg>
          <svg class="i" viewBox="0 0 16 16"><path d="M0 6l5-5M2 1h3v3M5 14h10M13 12l2 2-2 2M10 4h1" stroke="#ddd" stroke-width="1.300" fill="none"/><path d="M1 14l8-8" stroke="#63b6f5" stroke-width="1.500"/></svg>
          <svg class="i" viewBox="0 0 16 16"><circle cx="7" cy="7" r="6.500" fill="none" stroke="#ddd" stroke-width="1.200"/><path d="M2 2l7 7M2 5V2h3" stroke="#ddd" fill="none"/><path d="M9 10l4-2 3 3-4 5z" fill="#f3c970"/><path d="M9 10l4 5" stroke="#fff" stroke-width="2"/></svg>
          <svg class="i" viewBox="0 0 16 16"><path d="M1 12L13 2M0 9l4 5M10 0l4 4M13 2l2 2" stroke="#ddd" stroke-width="1.200"/><path d="M7 11l5-4 4 4-4 5z" fill="#f3c970"/><path d="M8 10l4 5" stroke="#fff" stroke-width="2"/></svg>
          <svg class="i" viewBox="0 0 16 16"><path d="M1 15C1 8 6 3 15 1" stroke="#ddd" stroke-width="1.500" stroke-dasharray="3 1.500" fill="none"/><path d="M9 7h7v9H9z" fill="#3b96ea"/><path d="M10 8h5v2h-5z" fill="#fff"/><path d="M10 12h5M10 14h5" stroke="#fff" stroke-dasharray="1 1"/></svg>
        </div>
        <div class="strip">
          <svg class="grip"><use href="#grip"/></svg>
          <svg class="i" viewBox="0 0 16 16"><use href="#pw"/><use href="#funnel" y="-1" width="16" height="16"/><use href="#arrowc"/></svg>
          <svg class="i" viewBox="0 0 16 16"><path d="M2 0h9l3 4v3H2z" fill="#ccc"/><path d="M7 0v7" stroke="#666"/><use href="#funnel" y="-1" width="16" height="16"/><use href="#tbl"/></svg>
          <svg class="i" viewBox="0 0 16 16"><use href="#pw" x="1" y="-1" width="16" height="16"/><use href="#funnel" y="-1" width="16" height="16"/><use href="#hash"/></svg>
        </div>
      </div>
    </div>
    <div class="cmd">
      <div class="cmdside"><svg class="grip"><use href="#grip"/></svg><svg class="x"><use href="#x"/></svg><svg class="i" viewBox="0 0 16 16"><path d="M1 15l8-8c-1-3 1-6 5-6l-2.500 3 1 1.500L15 4c1 4-3 6-5 5l-8 7z" fill="#ddd"/></svg></div>
      <div class="cmdmain">
        <div class="log"><p>Other is completed</p><p>Other is completed</p><p>CITNTD</p></div>
        <div class="cmdin"><svg viewBox="0 0 16 12"><path d="M.5 .5h15v11H.5z" fill="#eee" stroke="#555"/><path d="M0 0h16v3H0z" fill="#666"/><path d="M2 5l2 2-2 2M6 9h4" stroke="#333" fill="none"/></svg><svg class="ca"><use href="#caret"/></svg><input type="text" placeholder="Type a command" aria-label="Command"></div>
      </div>
    </div>
  </div>

  <aside class="props">
    <nav class="vtabs left"><a href="#" class="on">Design</a><a href="#">Display</a><a href="#">Extended Data</a><a href="#">Object Class</a></nav>
    <div class="pbody">
      <h2 class="phead">PROPERTIES</h2>
      <div class="psel"><label><select aria-label="Selection"><option>No selection</option></select><svg class="ca"><use href="#caret"/></svg></label>
        <button aria-label="Toggle pickadd"><svg class="i" viewBox="0 0 16 16"><path d="M0 2h9v9H0z" fill="#5fb0ec"/><path d="M5 6h10v10H5z" fill="#8ccbfa"/><path d="M12 0v8M8 4h8" stroke="#4fd07f" stroke-width="1.700"/></svg></button>
        <button aria-label="Select objects"><svg class="i" viewBox="0 0 16 16"><path d="M.7 .7h13v10H.7z" fill="none" stroke="#4fd07f" stroke-dasharray="2 1"/><path d="M2 2h10v8H2z" fill="#4fb676"/><path d="M9 5l7 7h-3.500l1.500 3-2 1-1.500-3L9 15z" fill="#fff"/></svg></button>
        <button aria-label="Quick select"><svg class="i" viewBox="0 0 16 16"><path d="M0 3l7 7H4l2 4-2 1-2-4-2 2z" fill="#fff"/><path d="M7 0l-3 5h3l-2 4 6-6H8l2-3z" fill="#f3c561"/><path d="M7 7h9v9H7z" fill="#fff"/><path d="M9 9.500h1M11 9.500h4M9 11.500h1M11 11.500h4M9 13.500h1M11 13.500h4" stroke="#3b96ea"/></svg></button>
      </div>
      <section class="grp"><h3>General<svg class="ca"><use href="#caret"/></svg></h3>
        <table><tr><th>Color</th><td><span class="sw"></span>ByLayer</td></tr><tr><th>Layer</th><td>0</td></tr><tr><th>Linetype</th><td><span class="ln"></span>ByLayer</td></tr><tr><th>Linetype scale</th><td>1.000</td></tr><tr><th>Lineweight</th><td><span class="ln"></span>ByLayer</td></tr><tr><th>Transparency</th><td>ByLayer</td></tr><tr><th>Thickness</th><td>0.000</td></tr></table></section>
      <section class="grp"><h3>3D Visualization<svg class="ca"><use href="#caret"/></svg></h3>
        <table><tr><th>Material</th><td>ByLayer</td></tr></table></section>
      <section class="grp"><h3>Plot style<svg class="ca"><use href="#caret"/></svg></h3>
        <table><tr><th>Plot style</th><td class="ro">ByColor</td></tr><tr><th>Plot style table</th><td>None</td></tr><tr><th>Plot table attached...</th><td class="ro">Model</td></tr><tr><th>Plot table type</th><td class="ro">Not available</td></tr></table></section>
      <section class="grp"><h3>View<svg class="ca"><use href="#caret"/></svg></h3>
        <table><tr><th>Center X</th><td class="ro">-761.815</td></tr><tr><th>Center Y</th><td class="ro">26150.683</td></tr><tr><th>Center Z</th><td class="ro">0.000</td></tr><tr><th>Height</th><td class="ro">67450.319</td></tr><tr><th>Width</th><td class="ro">138647.879</td></tr></table></section>
      <section class="grp"><h3>Misc<svg class="ca"><use href="#caret"/></svg></h3>
        <table><tr><th>Annotation scale</th><td>1:1000</td></tr><tr><th>UCS icon On</th><td>Yes</td></tr><tr><th>UCS icon at origin</th><td>No</td></tr><tr><th>UCS per viewport</th><td>Yes</td></tr><tr><th>UCS Name</th><td></td></tr><tr><th>Visual Style</th><td>2D Wireframe</td></tr></table></section>
    </div>
  </aside>
</main>

<footer class="status">
  <nav class="ltabs"><button class="hb" aria-label="Menu"><svg class="bg"><use href="#burger"/></svg></button><a href="#" class="cur"><b>Model</b></a><a href="#" class="lay">Layout1</a><svg class="sl"><use href="#slash"/></svg><a href="#" class="lay">Layout2</a><svg class="sl"><use href="#slash"/></svg><button class="pl" aria-label="New layout"><svg><use href="#plus"/></svg></button><svg class="sl"><use href="#slash"/></svg></nav>
  <div class="sgroups">
    <div class="sg"><button class="txt w47">MODEL</button></div>
    <div class="sg"><button aria-label="Grid"><svg class="i" viewBox="0 0 16 16"><path d="M4.500 0v16M8.500 0v16M12.500 0v16M0 4.500h16M0 8.500h16M0 12.500h16" stroke="#ddd"/></svg></button><button aria-label="Snap"><svg class="i" viewBox="0 0 16 16"><path d="M2 3h13M2 8h13M2 13h13" stroke="#ddd" stroke-width="2" stroke-dasharray="2 3"/></svg></button><button class="n" aria-label="Snap options"><svg class="ca"><use href="#caret"/></svg></button></div>
    <div class="sg"><button aria-label="Ortho"><svg class="i" viewBox="0 0 16 16"><path d="M1.500 0v14.500H16M1.500 9.500h5v5" stroke="#ddd" stroke-width="1.400" fill="none"/></svg></button><button aria-label="Polar"><svg class="i" viewBox="0 0 16 16"><path d="M7 9V4M7 9h9M7 9l7-8M11 4a6 6 0 1 0 2 5" stroke="#ddd" stroke-width="1.200" fill="none"/></svg></button><button class="n" aria-label="Polar options"><svg class="ca"><use href="#caret"/></svg></button><button aria-label="Isodraft"><svg class="i" viewBox="0 0 16 16"><path d="M2 1l12 14" stroke="#e0605f" stroke-width="1.300"/><path d="M8 0v16" stroke="#52d06d" stroke-width="1.300"/><circle cx="8" cy="8" r="1.500" fill="#ddd"/></svg></button><button class="n" aria-label="Isodraft options"><svg class="ca"><use href="#caret"/></svg></button><button class="on" aria-label="Object tracking"><svg class="i" viewBox="0 0 16 16"><path d="M13 1L2 14h13M8 11l3 3" stroke="#fff" stroke-width="1.500" fill="none"/></svg></button><button class="on" aria-label="Object snap"><svg class="i" viewBox="0 0 16 16"><path d="M4 4h10v11H3V6" stroke="#fff" stroke-width="1.300" fill="none"/><path d="M.5 .5h5v5h-5z" fill="#6290c8" stroke="#fff"/></svg></button><button class="n" aria-label="Object snap options"><svg class="ca"><use href="#caret"/></svg></button><button class="on" aria-label="Selection cycling"><svg class="i" viewBox="0 0 16 16"><path d="M3 0v6M0 3h6M3 6v3h3" stroke="#fff" fill="none"/><path d="M6 6h10v10H6z" fill="#fff"/><path d="M4 4h10" stroke="#fff"/></svg></button></div>
    <div class="sg"><button class="on" aria-label="Annotation visibility"><svg class="i" viewBox="0 0 16 16"><path d="M6 1l2 6 4 8-4-3H5l-4 3 4-8z" fill="#fff" stroke="#fff"/><circle cx="12.500" cy="4" r="2.500" fill="none" stroke="#fff"/></svg></button><button aria-label="Auto scale"><svg class="i" viewBox="0 0 16 16"><path d="M6 1l2 6 4 8-4-3H5l-4 3 4-8z" fill="#ddd" stroke="#ddd"/><path d="M14 0l-3 4h4l-3 4" stroke="#ddd" fill="none"/></svg></button><button aria-label="Annotation scale"><svg class="i" viewBox="0 0 16 16"><path d="M8 1l2 6 4 8-4-3H6l-4 3 4-8z" fill="#ddd" stroke="#ddd"/></svg></button><button class="txt w52">1:1000<svg class="ca"><use href="#caret"/></svg></button></div>
    <div class="sg"><button aria-label="Workspace"><svg class="i"><use href="#gear"/></svg></button><button class="n" aria-label="Workspace options"><svg class="ca"><use href="#caret"/></svg></button></div>
    <div class="sg"><button aria-label="Monitor"><svg class="i" viewBox="0 0 16 16"><path d="M8 0v16M0 8h16" stroke="#eee" stroke-width="1.800"/></svg></button></div>
    <div class="sg"><button aria-label="Elevation"><svg class="i" viewBox="0 0 16 16"><path d="M1 12l7-3 7 3-7 4z" fill="#ddd"/><path d="M0 8l8-4 8 4-8 5z" fill="#52a8ea"/><path d="M3 4a5 4 0 0 1 10 0" fill="none" stroke="#ddd" stroke-dasharray="1 1"/></svg></button><button class="txt w43">3.500</button></div>
    <div class="sg"><button aria-label="Isolate"><svg class="i" viewBox="0 0 16 16"><path d="M1 4V1h3M12 1h3v3M1 12v3h3M12 15h3v-3" fill="none" stroke="#ddd"/><path d="M4 10l4-6 5-1-1 5-5 5z" fill="#ddd"/><path d="M6 10l4-4" stroke="#52a8ea" stroke-width="2"/></svg></button><button class="n" aria-label="Isolate options"><svg class="ca"><use href="#caret"/></svg></button><button class="on" aria-label="Tags"><svg class="i" viewBox="0 0 16 16"><path d="M1 10l6-7 8-2-1 8-6 7z" fill="#fff"/><circle cx="11" cy="5" r="1.200" fill="#6290c8"/><path d="M5 10l3 2M7 8l3 2" stroke="#6290c8"/></svg></button><button aria-label="Shapes"><svg class="i" viewBox="0 0 16 16"><path d="M.5 1.500h5v5h-5zM3 14.500l3-5 3 5z" fill="none" stroke="#ddd"/><circle cx="12.500" cy="7" r="3" fill="none" stroke="#ddd"/></svg></button></div>
    <div class="sg"><button aria-label="Clean screen"><svg class="i" viewBox="0 0 16 16"><path d="M.5 2.500h15v11H.5z" fill="none" stroke="#ddd" stroke-width="1.300"/><path d="M3 9v2.500h3M10 4.500h3V7M13 4.500l-3 3M3 11.500l3-3" stroke="#ddd" fill="none"/></svg></button></div>
    <div class="sg"><button class="endb" aria-label="Customization"><svg class="bg"><use href="#burger"/></svg></button></div>
  </div>
</footer>

<section class="dlg" role="dialog" aria-labelledby="dlgt">
  <header><svg class="pg"><use href="#page"/></svg><h1 id="dlgt">Import Ntd</h1><div class="dctl"><button aria-label="Minimize"><svg><use href="#min"/></svg></button><button aria-label="Maximize"><svg><use href="#max"/></svg></button><button aria-label="Close"><svg><use href="#x"/></svg></button></div></header>
  <div class="dbody">
    <button class="wbtn">Path Ntd</button>
    <div class="gridbox g1"><table><colgroup><col class="c50"><col class="c127"><col class="c102"><col class="c128"><col class="c127"><col class="c90"><col></colgroup><thead><tr><th>No</th><th>SampleLine</th><th>Distance</th><th>Station</th><th>Ground elevation</th><th>Radius</th><th>Deflection angle</th></tr></thead></table><div class="sb"><svg class="up"><use href="#chev"/></svg><svg><use href="#chev"/></svg></div></div>
    <div class="two">
      <div class="gridbox"><table><colgroup><col class="c50"><col class="c103"><col class="c103"><col></colgroup><thead><tr><th>No</th><th>Distance</th><th>Ground elevation</th><th>Block code</th></tr></thead></table><div class="sb"><svg class="up"><use href="#chev"/></svg><svg><use href="#chev"/></svg></div></div>
      <div class="gridbox"><table><colgroup><col class="c50"><col class="c105"><col class="c105"><col></colgroup><thead><tr><th>No</th><th>Distance</th><th>Ground elevation</th><th>Block code</th></tr></thead></table><div class="sb"><svg class="up"><use href="#chev"/></svg><svg><use href="#chev"/></svg></div></div>
    </div>
    <div class="forms">
      <fieldset class="fa"><legend><label><input type="checkbox" checked disabled>Create alignment</label></legend>
        <div class="cols">
          <div class="fgrid">
            <label for="an">Name:</label><input id="an" type="text" disabled>
            <label for="ss">Start station (m):</label><input id="ss" type="text" value="0" disabled>
            <label for="as">Alignment style:</label><span class="combo"><select id="as" disabled></select><svg><use href="#chev"/></svg></span>
            <label for="al">Alignment label set:</label><span class="combo"><select id="al" disabled></select><svg><use href="#chev"/></svg></span>
            <label for="sl">Sample line style:</label><span class="combo"><select id="sl" disabled></select><svg><use href="#chev"/></svg></span>
            <label for="sll">Sample line label:</label><span class="combo"><select id="sll" disabled></select><svg><use href="#chev"/></svg></span>
          </div>
          <fieldset class="fd"><legend class="blk">Design Criteria</legend>
            <div class="speed"><label for="sp">Speed:</label><input id="sp" type="text" value="0" disabled></div>
            <fieldset class="fs"><legend><label><input type="checkbox" checked disabled>Use Design Speed</label></legend>
              <div class="opts"><label><input type="checkbox" checked disabled>Use Design Criteria File</label><button class="dots" disabled>...</button><label><input type="checkbox" checked disabled>Use Design Check Set</label></div>
            </fieldset>
          </fieldset>
        </div>
      </fieldset>
      <fieldset class="fb"><legend><label><input type="checkbox" checked disabled>Create surface</label></legend>
        <div class="fgrid sf"><label for="sn">Name:</label><input id="sn" type="text" disabled><label for="st">Style:</label><span class="combo"><select id="st" disabled></select><svg><use href="#chev"/></svg></span></div>
      </fieldset>
    </div>
  </div>
  <footer><button class="wbtn">Import</button></footer>
</section>
</body>
</html>
```

FILE: styles.css
```css
:root {
  --dark: #222933;
  --panel: #3b4453;
  --head: #2d3340;
  --line: #232a35;
  --text: #d4d7dc;
  --hi: #6290c8;
}
* { box-sizing: border-box; }
body {
  margin: 0;
  height: 100vh;
  display: flex;
  flex-direction: column;
  overflow: hidden;
  background: var(--panel);
  color: var(--text);
  font: 11px/15px "Open Sans", "Noto Sans", sans-serif;
}
button, input, select { font: inherit; color: inherit; border: 0; background: none; padding: 0; margin: 0; border-radius: 0; }
select { appearance: none; opacity: 1; }
a { color: inherit; text-decoration: none; white-space: nowrap; }
h1, h2, h3, p, ul { margin: 0; padding: 0; font-weight: 400; font-size: 11px; list-style: none; }
svg { display: block; flex: none; }
.defs { position: absolute; width: 0; height: 0; }
.i { width: 16px; height: 16px; }
.ca { width: 8px; height: 8px; }
.sv { font-family: "Liberation Sans", sans-serif; }
.split { display: flex; align-items: center; }
.q { width: 16px; height: 16px; border-radius: 8px; background: #d8d8d8; color: #333; font-weight: 700; font-size: 12px; line-height: 16px; text-align: center; }

/* title bar */
.titlebar { flex: none; height: 28px; display: flex; align-items: center; background: var(--dark); color: #e6e8eb; padding-bottom: 2px; overflow: hidden; }
.qat { width: 786px; display: flex; align-items: center; padding-left: 15px; }
.logo { width: 24px; height: 22px; background: #d41483; border-bottom: 4px solid #7d0d50; border-left: 2px solid #ef4aab; color: #fff; font-weight: 700; font-size: 13px; line-height: 16px; }
.car { width: 18px; height: 16px; display: grid; place-items: center; color: #cfd2d6; }
.car svg { width: 8px; height: 8px; }
.logo + .car { width: 14px; }
.qicons { display: flex; gap: 8px; margin-left: 8px; }
.qicons .split { margin-right: -6px; }
.qicons .dim { color: #888; }
.workspace { position: relative; width: 178px; height: 20px; display: flex; align-items: center; gap: 3px; padding-left: 3px; margin-left: 5px; background: var(--panel); color: #dfe1e4; }
.workspace select { flex: 1; }
.workspace .ca { margin-right: 2px; }
.share { display: flex; align-items: center; gap: 4px; color: #7cc1f7; margin-left: 4px; }
.doctitle { flex: 1; display: flex; gap: 15px; white-space: nowrap; }
.infobar { width: 662px; display: flex; align-items: center; }
.search { width: 178px; height: 20px; margin-left: 5px; background: #464f60; padding: 0 2px; }
.search::placeholder { color: #a9aeb7; font-style: italic; opacity: 1; }
.mag { margin: 0 8px 0 5px; }
.user { display: flex; gap: 4px; align-items: center; width: 105px; }
.push { margin-right: 9px; }
.infobar .split { gap: 4px; margin-left: 6px; }
.vbar { width: 1px; height: 18px; background: #4c5564; margin: 0 4px 0 9px; }
.q + .ca { margin-right: 8px; }
.winctl, .docctl, .dctl { display: flex; }
.winctl { margin-left: auto; }
.winctl button, .dctl button { width: 46px; display: grid; place-items: center; }
.winctl svg, .docctl svg, .dctl svg { width: 12px; height: 12px; }
.winctl button:last-child { margin-right: -5px; }

/* menu bar and ribbon tabs */
.menubar { flex: none; height: 21px; display: flex; justify-content: space-between; align-items: center; background: var(--dark); border-bottom: 1px solid #3f4959; color: #b6bac1; }
.menus { display: grid; padding-left: 14px; grid-template-columns: 42px 44px 49px 53px 59px 49px 52px 63px 87px 61px 66px 85px 63px 73px 68px 47px 74px 56px 63px 67px auto; }
.docctl { color: #e6e8eb; gap: 20px; padding-right: 5px; }
.rtabs { flex: none; height: 24px; display: grid; align-items: end; background: var(--dark); color: #b6bac1; padding-left: 13px; line-height: 20px; grid-template-columns: 53px 49px 69px 58px 61px 45px 63px 58px 55px 40px 81px 77px 81px 45px 62px 96px 121px 95px auto; }
.rtabs .on { background: var(--panel); color: #f1f2f4; padding-left: 9px; }
.rmin { display: flex; align-items: center; gap: 4px; height: 18px; margin-left: 22px; }
.rbox { width: 15px; height: 8px; }

/* ribbon */
.ribbon { flex: none; height: 99px; display: flex; background: var(--panel); padding-left: 1px; color: #e3e5e8; }
.rp { display: flex; flex-direction: column; border-right: 1px solid var(--line); white-space: nowrap; margin-top: 1px; }
.rb { flex: 1; display: flex; align-items: flex-start; }
.rb button { padding-top: 7px; flex: 1; text-align: center; display: block; }
.rb button > svg { width: 32px; height: 32px; margin: 0 auto 2px; }
.rb button > .ca { width: 7px; height: 7px; margin: 0 auto; }
.rp h2 { text-align: center; height: 18px; }
.p1 { width: 75px; } .p2 { width: 105px; } .p3 { width: 72px; } .p4 { width: 120px; } .p5 { width: 125px; }
.p6 { width: 144px; } .p7 { width: 131px; } .p8 { width: 64px; } .p9 { width: 108px; } .p10 { width: 132px; border: 0; }
.p2 .rb { padding-right: 2px; }
.p4 .rb, .p6 .rb { padding-right: 5px; }
.p7 .rb { padding-right: 4px; }
.rb button:first-child:not(:last-child) { flex: none; width: 66px; }
.p2 .rb button:first-child:not(:last-child) { width: 42px; }
.p4 .rb button:first-child:not(:last-child) { width: 46px; }
.p5 .rb button:first-child:not(:last-child) { width: 51px; }
.p6 .rb button:first-child:not(:last-child) { width: 76px; }

/* drawing tabs */
.ftabs { flex: none; height: 27px; display: flex; align-items: center; background: var(--dark); padding: 2px 0 0 16px; color: #e3e5e8; }
.bg { width: 16px; height: 14px; }
.sl { width: 9px; height: 18px; }
.ftabs .hb { margin-right: 10px; }
.ftabs .start { margin-left: 7px; width: 32px; }
.cur { height: 100%; background: var(--panel); display: flex; align-items: center; color: #f4f5f6; clip-path: polygon(10px 0, 100% 0, calc(100% - 10px) 100%, 0 100%); }
.ftabs .cur { width: 100px; padding-left: 16px; gap: 10px; }
.cx { width: 10px; height: 10px; color: #b9bdc4; }
.pl svg { width: 14px; height: 14px; }
.ftabs .pl { margin: 0 11px 0 8px; }

main { flex: 1; min-height: 0; display: flex; padding-top: 4px; }

/* toolspace */
.toolspace { flex: none; width: 428px; display: flex; }
.tsbody { width: 403px; display: flex; flex-direction: column; padding: 2px 0 9px; }
.phead { flex: none; height: 20px; background: var(--head); border-radius: 4px 4px 0 0; line-height: 18px; font-size: 12px; color: #dfe1e5; padding-left: 15px; position: relative; }
.phead::before { content: ""; position: absolute; left: 6px; top: 6px; width: 3px; height: 10px; background: repeating-linear-gradient(transparent 0 1px, var(--head) 1px 2px), linear-gradient(90deg, #9ba1ab 1px, transparent 1px 2px, #9ba1ab 2px); }
.tstools { height: 30px; display: flex; align-items: center; gap: 11px; padding: 0 6px 0 5px; }
.tstools button:first-child { margin-right: auto; }
.view { position: relative; height: 21px; display: flex; align-items: center; background: #fdfdfd; color: #000; padding: 0 4px 0 2px; border: 1px solid #ccc; }
.view select { flex: 1; }
.view svg { width: 10px; height: 10px; color: #444; }
.tree { flex: 1; min-height: 0; background: #fff; border: 1px solid #828995; color: #000; margin-top: 2px; padding-top: 1px; }
.row, .tree li li { position: relative; display: flex; align-items: center; height: 20px; }
.row { padding-left: 9px; }
.row .i { margin: 0 7px; }
.root { position: relative; }
.root:first-child::before { content: ""; position: absolute; left: 13px; top: 14px; bottom: -6px; border-left: 1px dotted #888; }
.row::after { content: ""; position: absolute; left: 19px; top: 10px; width: 4px; border-top: 1px dotted #888; }
.tree li li { padding-left: 28px; }
.tree li li::before { content: ""; position: absolute; left: 32px; top: 0; height: 20px; border-left: 1px dotted #888; }
.tree li li:last-child::before { height: 10px; }
.tree li li::after { content: ""; position: absolute; left: 33px; top: 10px; width: 8px; border-top: 1px dotted #888; }
.tree li li .i { margin: 0 7px; }
.tree i { width: 9px; }
.ex { position: relative; z-index: 1; flex: none; width: 9px; height: 9px; border: 1px solid #919191; border-radius: 1px; background: linear-gradient(#3c5a9a, #3c5a9a) center / 5px 1px no-repeat #f6f6f6; }
.ex.add { background: linear-gradient(#3c5a9a, #3c5a9a) center / 5px 1px no-repeat, linear-gradient(#3c5a9a, #3c5a9a) center / 1px 5px no-repeat #f6f6f6; }
.preview { flex: none; height: 93px; margin-top: 8px; border: 1px solid #9a9fa7; }
.vtabs { width: 20px; padding-top: 24px; display: flex; flex-direction: column; }
.vtabs a { height: 121px; flex: none; writing-mode: vertical-rl; transform: rotate(180deg); display: flex; align-items: center; justify-content: center; background: var(--head); border: 1px solid var(--line); border-right: 0; border-radius: 4px 0 0 4px; color: #b9bdc5; font-size: 12px; }
.vtabs .on { background: var(--panel); color: #e4e6e9; }
.vtabs.left a { border-radius: 0 4px 4px 0; border-right: 1px solid var(--line); border-left: 0; }

/* drawing area */
.center { flex: 1; min-width: 0; display: flex; flex-direction: column; padding-bottom: 4px; }
.work { flex: 1; min-height: 0; display: flex; gap: 4px; padding-right: 2px; }
.canvas { flex: 1; position: relative; background: #222930; overflow: hidden; }
.vplabel { padding: 6px 0 0 3px; font-size: 12px; color: #dfe1e3; }
.cube { position: absolute; right: 17px; top: 13px; width: 136px; height: 140px; }
.wcs { position: absolute; right: 59px; top: 169px; width: 48px; height: 18px; border: 1px solid #6f7480; border-radius: 4px; background: #9295a3; color: #4b4f58; display: flex; align-items: center; justify-content: center; gap: 5px; }
.wcs svg { width: 8px; height: 8px; }
.navbar { position: absolute; right: 4px; top: 212px; width: 32px; height: 212px; }
.ucs { position: absolute; left: 10px; bottom: 13px; width: 76px; height: 76px; }
.strips { width: 25px; display: flex; flex-direction: column; gap: 2px; }
.strip { border: 1px solid var(--line); display: flex; flex-direction: column; align-items: center; gap: 6px; padding: 1px 0; }
.grip { width: 14px; height: 4px; }
.strip hr { width: 19px; height: 2px; margin: -1px 0; border: 0; background: #e8e8e8; }

/* command line */
.cmd { flex: none; margin-top: 4px; height: 60px; display: flex; }
.cmdside { width: 25px; background: var(--head); display: flex; flex-direction: column; align-items: center; justify-content: space-between; padding: 5px 2px 4px 0; }
.cmdside .x { width: 12px; height: 12px; }
.cmdmain { flex: 1; border: 1px solid #1d232c; border-left: 0; display: flex; flex-direction: column; font: 12px/15px "Liberation Mono", monospace; color: #111; }
.log { height: 38px; background: #c8c8c8; overflow: hidden; display: flex; flex-direction: column; justify-content: flex-end; padding-left: 1px; border-bottom: 1px solid #444; }
.log p { font-size: 12px; flex: none; }
.cmdin { flex: 1; background: #fff; display: flex; align-items: center; gap: 2px; padding-left: 4px; color: #555; }
.cmdin > svg:first-child { width: 16px; height: 12px; }
.cmdin input { flex: 1; margin-left: 5px; }
.cmdin input::placeholder { font-style: italic; color: #777; opacity: 1; }

/* properties */
.props { flex: none; width: 337px; padding-left: 5px; display: flex; }
.props .vtabs { width: 21px; }
.pbody { flex: 1; padding-top: 2px; margin-bottom: 7px; border-bottom: 1px solid var(--line); }
.psel { display: flex; align-items: center; gap: 8px; padding: 12px 6px 3px 5px; }
.psel label { flex: 1; height: 24px; display: flex; align-items: center; background: #4c586d; border: 1px solid var(--line); padding: 0 3px; color: #e3e5e8; }
.psel select { flex: 1; }
.grp { margin: 0 13px 3px 10px; }
.grp h3 { height: 20px; line-height: 18px; padding: 0 7px 1px; background: var(--head); color: #f0f1f3; font-weight: 700; display: flex; align-items: center; justify-content: space-between; }
.grp table { width: 271px; margin-left: auto; border-collapse: separate; border-spacing: 0; border-left: 1px solid var(--line); table-layout: fixed; }
.grp th, .grp td { height: 19px; padding: 0 0 0 7px; font-weight: 400; text-align: left; line-height: 18px; white-space: nowrap; border-bottom: 1px solid var(--line); border-right: 1px solid var(--line); overflow: hidden; }
.grp th { width: 124px; color: #c3c7ce; }
.grp td { padding-left: 3px; color: #eceef0; }
.grp .ro { color: #8e949e; }
.sw { display: inline-block; width: 14px; height: 14px; background: #fff; vertical-align: middle; margin-right: 6px; }
.ln { display: inline-block; width: 66px; height: 1px; background: #fff; vertical-align: middle; margin-right: 5px; }

/* status bar */
.status { flex: none; height: 23px; display: flex; justify-content: space-between; background: var(--dark); color: #e3e5e8; }
.ltabs { display: flex; align-items: center; padding-left: 16px; }
.ltabs .hb { margin-right: 11px; }
.ltabs .cur { width: 66px; justify-content: center; }
.lay { padding: 0 8px; }
.ltabs .pl { margin: 0 8px 0 10px; }
.sgroups { display: flex; gap: 3px; padding-top: 2px; }
.sg { display: flex; background: var(--panel); }
.sg button { width: 24px; display: grid; place-items: center; }
.sg .n { width: 16px; }
.sg .on { background: var(--hi); border-right: 1px solid var(--panel); }
.sg .txt { display: flex; align-items: center; justify-content: center; gap: 3px; font-size: 12px; }
.sg .w47 { width: 48px; } .sg .w52 { width: 55px; } .sg .w43 { width: 43px; }
.sg .endb { width: 21px; }

/* import dialog */
.dlg { position: absolute; left: 567px; top: 161px; width: 786px; background: #f0f0f0; color: #111; border-radius: 7px; box-shadow: 0 0 0 1px #555c66, 0 6px 24px rgba(0, 0, 0, .45); overflow: hidden; }
.dlg > header { height: 30px; background: #f0f3fb; display: flex; align-items: center; padding: 0 0 2px 10px; color: #000; }
.pg { width: 12px; height: 15px; margin-right: 7px; }
.dctl { margin-left: auto; }
.dctl svg { color: #111; }
.dbody { padding: 8px 8px 9px; display: flex; flex-direction: column; gap: 8px; }
.wbtn { width: 80px; height: 22px; background: #ddd; border: 1px solid #a5a5a5; padding-bottom: 2px; }
.gridbox { display: flex; background: #fff; border: 1px solid #a5a8ac; height: 188px; }
.g1 { height: 184px; }
.gridbox table { flex: 1; align-self: flex-start; table-layout: fixed; border-collapse: separate; border-spacing: 0; }
.gridbox th { height: 40px; padding: 0 0 2px; font-weight: 400; background: #cdcdcd; border-right: 1px solid #a9acb0; border-bottom: 1px solid #a9acb0; }
.c50 { width: 50px; } .c90 { width: 90px; } .c102 { width: 102px; } .c103 { width: 103px; } .c105 { width: 105px; } .c127 { width: 127px; } .c128 { width: 128px; }
.sb { flex: none; width: 17px; margin-top: 40px; background: #f0f0f0; color: #c4c4c4; display: flex; flex-direction: column; align-items: center; justify-content: space-between; padding: 4px 0; }
.sb svg { width: 10px; height: 10px; }
.up { transform: rotate(180deg); }
.two { display: grid; grid-template-columns: 377px 1fr; gap: 8px; }
.forms { display: grid; grid-template-columns: 578px 1fr; gap: 10px; margin: 3px 1px 0; color: #838383; }
fieldset { border: 1px solid #acacac; border-radius: 3px; box-shadow: 0 0 0 1px #fff; margin: 0; padding: 0; min-width: 0; }
legend { background: #f0f0f0; padding: 0 4px 0 0; height: 14px; line-height: 13px; margin-left: 8px; }
legend label, .opts label { display: flex; align-items: center; gap: 6px; height: 13px; line-height: 13px; }
.blk { color: #000; padding: 0 4px; margin-left: 3px; }
.fa, .fb { height: 196px; }
.cols { display: flex; justify-content: space-between; padding-right: 10px; }
.fgrid { display: grid; grid-template-columns: 112px 120px; grid-auto-rows: 22px; gap: 5px 0; align-items: center; padding: 8px 0 0 12px; }
.fgrid label, .speed label { padding-bottom: 2px; }
.forms input[type=text] { width: 100%; height: 22px; border: 1px solid #c6cacf; background: #fafafa; padding: 0 5px; color: #a3a3a3; }
.forms #sp { width: 150px; }
.combo { position: relative; height: 22px; display: flex; align-items: center; border: 1px solid #d9d9d9; }
.combo select { flex: 1; height: 20px; }
.combo svg { width: 6px; height: 6px; margin-right: 6px; color: #999; }
input[type=checkbox] { appearance: none; position: relative; width: 13px; height: 13px; border: 1px solid #bcbcbc; background: #e6e6e6; }
input[type=checkbox]::after { content: ""; position: absolute; left: 3px; top: 0; width: 5px; height: 9px; border: solid #707070; border-width: 0 2px 2px 0; transform: rotate(40deg); }
.fd { width: 312px; height: 166px; }
.speed { display: flex; align-items: center; gap: 7px; padding: 9px 0 0 7px; margin-bottom: 7px; }
.fs { width: 289px; height: 103px; margin-left: 10px; }
.opts { display: flex; flex-direction: column; gap: 9px; padding: 11px 0 0 10px; }
.dots { width: 22px; height: 22px; border: 1px solid #adb2b5; background: #f4f4f4; color: #838383; }
.sf { grid-template-columns: 42px 1fr; padding: 8px 10px 0 7px; }
.sf input[type=text], .sf .combo { border-right: 0; }
.sf label[for=st] { padding-left: 5px; }
.dlg > footer { height: 39px; border-top: 1px solid #a5a5a5; padding: 8px; display: flex; justify-content: flex-end; }
```
